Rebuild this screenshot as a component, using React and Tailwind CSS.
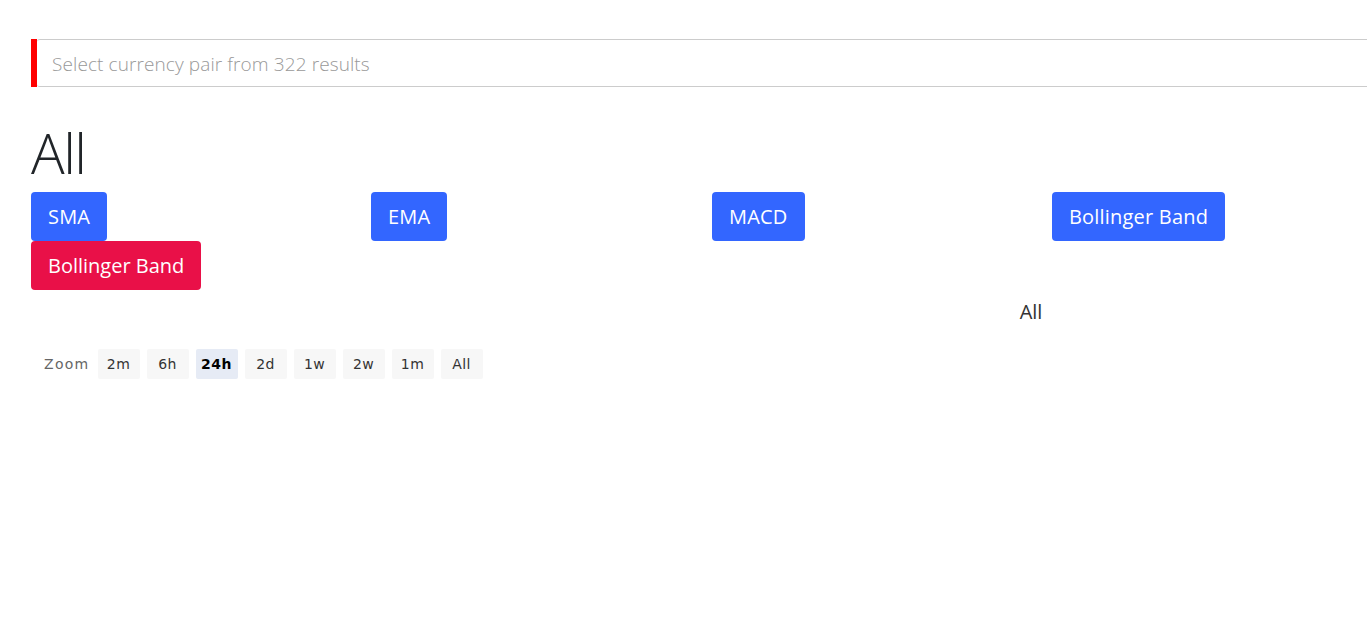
import React from 'react';

// ========================================================================== //
// ! Indicator chart page
// ========================================================================== //

const indicators = ['SMA', 'EMA', 'MACD', 'Bollinger Band'];
const ranges = ['2m', '6h', '24h', '2d', '1w', '2w', '1m', 'All'];

const App = () => {
  return (
    <div className="w-full overflow-hidden bg-white" style={{ minHeight: 620 }}>
      <div className="w-[1362px] ml-[31px] pt-[39px] font-['Open_Sans',sans-serif] text-[#212529]">
        {/* --- Pair search --- */}
        <div className="flex h-[48px]">
          <div className="w-[6px] bg-[#ff0000]" />
          <input
            type="text"
            placeholder="Select currency pair from 322 results"
            className="flex-1 border border-l-0 border-[#cccccc] rounded-l-[3px] px-[15px] pt-[2px] text-[19px] font-light tracking-[0.1px] placeholder:text-[#999999] focus:outline-none"
          />
        </div>

        {/* --- Title --- */}
        <h1 className="mt-[32px] text-[56px] font-light leading-[67px] tracking-[-1.5px]">All</h1>

        {/* --- Indicator buttons --- */}
        <div className="grid grid-cols-[340px_341px_340px_1fr] mt-[6px]">
          {indicators.map((name) => (
            <div key={name}>
              <button className="h-[49px] px-[17px] pt-[1px] rounded-[4px] bg-[#3366ff] text-white text-[20px] tracking-[0.2px]">
                {name}
              </button>
            </div>
          ))}
          <div>
            <button className="h-[49px] px-[17px] pt-[1px] rounded-[4px] bg-[#e91048] text-white text-[20px]">
              Bollinger Band
            </button>
          </div>
        </div>

        {/* --- Chart title --- */}
        <div className="mt-[9px] w-[2000px] text-center text-[20px] leading-[26px] text-[#333333]">All</div>

        {/* --- Range selector --- */}
        <div className="flex items-center mt-[24px] pl-[13px] font-['DejaVu_Sans',sans-serif] text-[14px]">
          <span className="text-[#666666] mr-[8px] tracking-[1.3px]">Zoom</span>
          <div className="flex gap-[7px]">
            {ranges.map((r) => (
              <button
                key={r}
                className={
                  r === '24h'
                    ? 'w-[42px] h-[30px] rounded-[2px] bg-[#e6ebf5] text-black font-bold tracking-[0.5px]'
                    : 'w-[42px] h-[30px] rounded-[2px] bg-[#f7f7f7] text-[#333333] tracking-[0.5px]'
                }
              >
                {r}
              </button>
            ))}
          </div>
        </div>
      </div>
    </div>
  );
};

export default App;
